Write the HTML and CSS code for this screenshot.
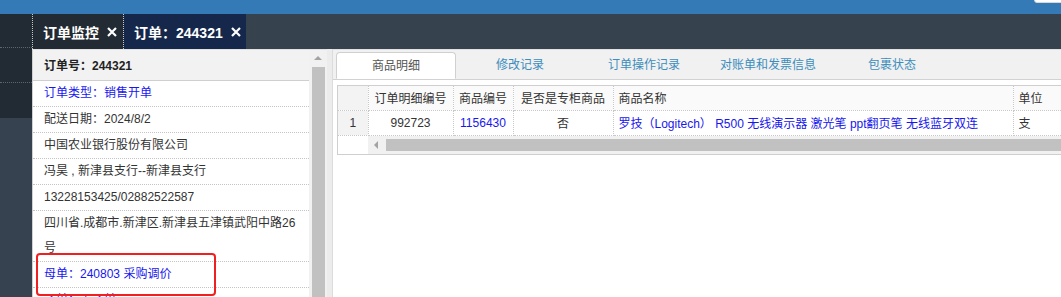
FILE: index.html
```html
<!DOCTYPE html>
<html lang="zh-CN">
<head>
<meta charset="utf-8">
<title>订单：244321</title>
<link rel="stylesheet" href="styles.css">
</head>
<body>
<div class="topbar"><div class="corner"></div></div>
<div class="main">
  <aside class="sidebar">
    <div class="side-item"></div>
    <div class="side-item"></div>
    <div class="side-item"></div>
    <div class="side-rest"></div>
  </aside>
  <div class="workspace">
    <nav class="tabbar">
      <div class="tab">订单监控<svg class="x" viewBox="0 0 10 10" width="10" height="10"><path d="M1 1L9 9M9 1L1 9" stroke="#fff" stroke-width="2.2"/></svg></div>
      <div class="tab active">订单：244321<svg class="x" viewBox="0 0 10 10" width="10" height="10"><path d="M1 1L9 9M9 1L1 9" stroke="#fff" stroke-width="2.2"/></svg></div>
    </nav>
    <div class="content">
      <section class="detail-wrap">
        <div class="detail">
          <div class="d-head">订单号：244321</div>
          <div class="d-row blue">订单类型：销售开单</div>
          <div class="d-row">配送日期：2024/8/2</div>
          <div class="d-row">中国农业银行股份有限公司</div>
          <div class="d-row">冯昊 , 新津县支行--新津县支行</div>
          <div class="d-row">13228153425/02882522587</div>
          <div class="d-row">四川省.成都市.新津区.新津县五津镇武阳中路26号</div>
          <div class="d-row blue">母单：240803 采购调价</div>
          <div class="d-row blue">子单：无子单</div>
        </div>
        <div class="vscroll">
          <div class="up"></div>
          <div class="vthumb"></div>
        </div>
      </section>
      <div class="gutter"></div>
      <section class="orders">
        <div class="otabs">
          <div class="otab active">商品明细</div>
          <div class="otab">修改记录</div>
          <div class="otab">订单操作记录</div>
          <div class="otab">对账单和发票信息</div>
          <div class="otab">包裹状态</div>
        </div>
        <div class="grid">
          <table>
            <colgroup>
              <col class="c-num"><col class="c-id"><col class="c-code"><col class="c-flag"><col class="c-name"><col class="c-unit">
            </colgroup>
            <thead>
              <tr><th class="num"></th><th>订单明细编号</th><th>商品编号</th><th>是否是专柜商品</th><th class="left">商品名称</th><th class="left">单位</th></tr>
            </thead>
            <tbody>
              <tr><td class="num">1</td><td>992723</td><td class="blue">1156430</td><td>否</td><td class="left blue">罗技（Logitech） R500 无线演示器 激光笔 ppt翻页笔 无线蓝牙双连</td><td class="left">支</td></tr>
            </tbody>
          </table>
          <div class="hscroll-row">
            <div class="hs-pad"></div>
            <div class="hscroll"><div class="left-arrow"></div><div class="hthumb"></div></div>
          </div>
        </div>
      </section>
    </div>
  </div>
</div>
<div class="mark"></div>
</body>
</html>
```

FILE: styles.css
```css
* { box-sizing: border-box; }
html, body {
  margin: 0;
  padding: 0;
  width: 1061px;
  height: 297px;
  overflow: hidden;
  background: #fff;
  font-family: "Liberation Sans", "Noto Sans CJK SC", sans-serif;
  font-size: 12px;
  color: #333;
}
.topbar {
  height: 14px;
  background: #337ab7;
  position: relative;
}
.corner {
  position: absolute;
  right: -4px;
  top: -4px;
  width: 31px;
  height: 7px;
  background: #fff;
  border: 1px solid #d8d8d8;
  border-radius: 0 0 0 3px;
}
.main {
  display: flex;
  height: 283px;
}
.sidebar {
  width: 32px;
  display: flex;
  flex-direction: column;
  background: #36424f;
}
.side-item {
  height: 35px;
  background: #222a33;
  border-bottom: 1px dotted #5d6570;
}
.side-item:first-child { height: 34px; }
.side-item:nth-child(3) { border-bottom: none; }
.side-rest { flex: 1; }
.workspace {
  flex: 1;
  display: flex;
  flex-direction: column;
  min-width: 0;
}
.tabbar {
  height: 35px;
  background: #36424e;
  display: flex;
}
.tab {
  display: flex;
  align-items: center;
  height: 35px;
  padding: 0 6px 0 10px;
  color: #fff;
  font-weight: bold;
  font-size: 14px;
  background: #222a33;
  border-left: 1px dotted #c8c8c8;
}
.tab.active {
  background: #15284b;
  padding-right: 5px;
}
.tab .x { margin-left: 8px; }
.content {
  flex: 1;
  display: flex;
  min-height: 0;
}
.detail-wrap {
  width: 295px;
  display: flex;
  border-top: 1px solid #e2e2e2;
}
.detail {
  width: 277px;
  border-left: 1px solid #d0d0d0;
  overflow: hidden;
}
.d-head {
  height: 31px;
  padding: 2px 11px 0;
  line-height: 28px;
  background: #f2f2f2;
  font-weight: bold;
  color: #222;
  border-bottom: 1px solid #cfcfcf;
  font-size: 12px;
}
.d-row {
  padding: 0 11px;
  line-height: 25px;
  border-bottom: 1px dotted #c4c4c4;
}
.blue { color: #1717ee; }
.vscroll {
  width: 18px;
  background: #f1f1f1;
  display: flex;
  flex-direction: column;
  align-items: center;
}
.up {
  margin-top: 6px;
  width: 0;
  height: 0;
  border-left: 4px solid transparent;
  border-right: 4px solid transparent;
  border-bottom: 4px solid #a3a3a3;
}
.vthumb {
  margin-top: 7px;
  width: 13px;
  flex: 1;
  background: #c1c1c1;
}
.gutter {
  width: 6px;
  background: #ececec;
  border-right: 1px solid #dcdcdc;
}
.orders {
  flex: 1;
  min-width: 0;
  overflow: hidden;
  border-top: 1px solid #e2e2e2;
}
.otabs {
  height: 30px;
  background: #f1f1f1;
  border-bottom: 1px solid #d2d2d2;
  display: flex;
  gap: 4px;
  padding: 2px 0 0 3px;
}
.otab {
  width: 120px;
  height: 27px;
  margin-bottom: -1px;
  line-height: 26px;
  text-align: center;
  color: #3c8dbc;
  font-size: 12px;
}
.otab.active {
  background: #fff;
  color: #555;
  border: 1px solid #d0d0d0;
  border-bottom-color: #fff;
  border-radius: 4px 4px 0 0;
}
.grid {
  margin: 5px 0 0 4px;
  border: 1px solid #cfcfcf;
  border-right: none;
  width: 760px;
}
table {
  border-collapse: collapse;
  table-layout: fixed;
  width: 760px;
}
.c-num { width: 30px; }
.c-id { width: 85px; }
.c-code { width: 60px; }
.c-flag { width: 100px; }
.c-name { width: 400px; }
.c-unit { width: 85px; }
th, td {
  font-weight: normal;
  text-align: center;
  white-space: nowrap;
  overflow: hidden;
  border-right: 1px dotted #c8c8c8;
  border-bottom: 1px dotted #c8c8c8;
  padding: 0 4px;
}
th {
  height: 24px;
  background: #fafafa;
}
td { height: 25px; }
th.left, td.left { text-align: left; padding-left: 5px; }
.num { background: #f3f3f3; }
.hscroll-row {
  display: flex;
  height: 18px;
}
.hs-pad { width: 30px; background: #fff; }
.hscroll {
  flex: 1;
  background: #f1f1f1;
  display: flex;
  align-items: center;
}
.left-arrow {
  margin-left: 6px;
  width: 0;
  height: 0;
  border-top: 4px solid transparent;
  border-bottom: 4px solid transparent;
  border-right: 4px solid #a3a3a3;
}
.hthumb {
  margin-left: 8px;
  flex: 1;
  height: 12px;
  background: #c1c1c1;
}
.mark {
  position: absolute;
  left: 36px;
  top: 253px;
  width: 180px;
  height: 43px;
  border: 2px solid #f02020;
  border-radius: 4px;
}
```
